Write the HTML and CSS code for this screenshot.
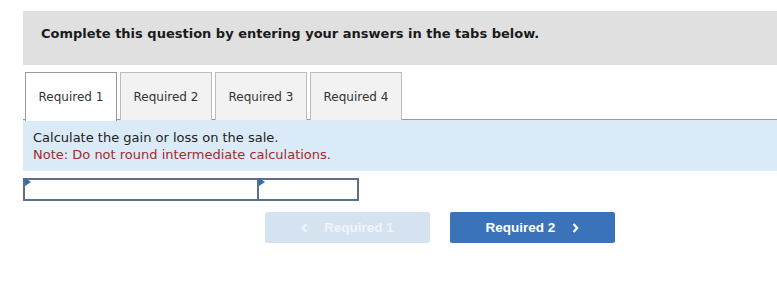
FILE: index.html
```html
<!DOCTYPE html>
<html>
<head>
<meta charset="utf-8">
<link rel="stylesheet" href="styles.css">
</head>
<body>
<div class="page">
  <div class="banner">Complete this question by entering your answers in the tabs below.</div>
  <div class="tabs">
    <div class="tab active">Required 1</div>
    <div class="tab">Required 2</div>
    <div class="tab">Required 3</div>
    <div class="tab">Required 4</div>
  </div>
  <div class="panel">
    <div class="instr">Calculate the gain or loss on the sale.</div>
    <div class="note">Note: Do not round intermediate calculations.</div>
  </div>
  <div class="answer">
    <div class="cell wide"><span class="flag"></span></div>
    <div class="cell narrow"><span class="flag"></span></div>
  </div>
  <div class="nav">
    <button class="btn prev"><svg class="chev" width="7" height="10" viewBox="0 0 7 10"><path d="M5.5 1 L1.8 5 L5.5 9" fill="none" stroke="currentColor" stroke-width="2.2"/></svg>Required 1</button>
    <button class="btn next">Required 2<svg class="chev" width="7" height="10" viewBox="0 0 7 10"><path d="M1.5 1 L5.2 5 L1.5 9" fill="none" stroke="currentColor" stroke-width="2.2"/></svg></button>
  </div>
</div>
</body>
</html>
```

FILE: styles.css
```css
html, body {
  margin: 0;
  padding: 0;
  background: #fff;
}
.page {
  padding: 11px 0 0 23px;
  font-family: "DejaVu Sans", Verdana, sans-serif;
  color: #222;
}
.banner {
  background: #e0e0e0;
  height: 54px;
  box-sizing: border-box;
  padding: 15px 0 0 18px;
  font-size: 13px;
  font-weight: bold;
  color: #1a1a1a;
}
.tabs {
  display: flex;
  gap: 3px;
  margin-top: 7px;
  padding-left: 2px;
  border-bottom: 1px solid #9a9a9a;
  height: 47px;
}
.tab {
  width: 90px;
  height: 47px;
  border: 1px solid #bcbcbc;
  border-bottom: none;
  background: #f2f2f2;
  font-size: 12px;
  color: #333;
  display: flex;
  align-items: center;
  justify-content: center;
}
.tab.active {
  background: #fff;
  border-color: #9a9a9a;
  height: 48px;
  position: relative;
  z-index: 1;
}
.panel {
  background: #dbeaf7;
  height: 51px;
  box-sizing: border-box;
  padding: 9px 0 0 10px;
  font-size: 13px;
  line-height: 17px;
}
.instr { color: #222; }
.note { color: #a32a2a; }
.answer {
  display: flex;
  margin-top: 7px;
}
.cell {
  height: 19px;
  border: 2px solid #5b6f8a;
  position: relative;
  background: #fff;
}
.cell.wide { width: 232px; }
.cell.narrow { width: 98px; margin-left: -2px; }
.flag {
  position: absolute;
  left: 0;
  top: -2px;
  width: 0;
  height: 0;
  border-top: 4px solid transparent;
  border-bottom: 4px solid transparent;
  border-left: 6px solid #2f6db5;
}
.nav {
  display: flex;
  gap: 20px;
  margin-top: 11px;
  padding-left: 242px;
}
.btn {
  width: 165px;
  height: 31px;
  border: none;
  border-radius: 2px;
  font-family: "Liberation Sans", Arial, sans-serif;
  font-weight: bold;
  font-size: 13.5px;
  color: #fff;
  display: flex;
  align-items: center;
  justify-content: center;
  padding: 0;
}
.prev {
  background: #d5e3f1;
  color: #eef4fa;
}
.next {
  background: #3a73b9;
}
.chev {
  display: block;
}
.prev .chev { margin-right: 16px; }
.next .chev { margin-left: 17px; }
```
